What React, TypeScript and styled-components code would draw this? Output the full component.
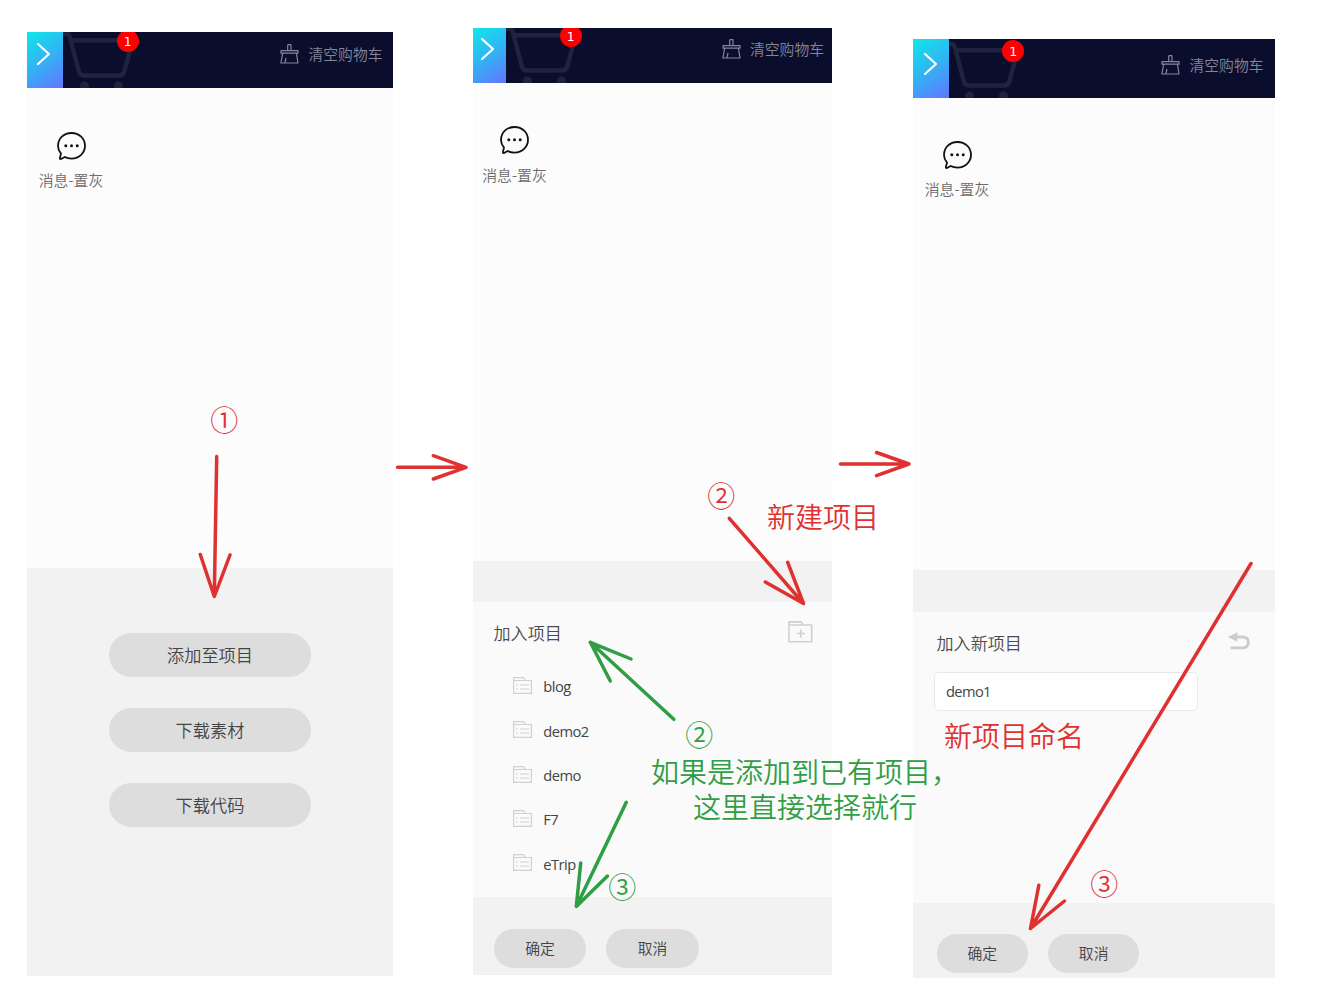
import React from "react";
import styled, { createGlobalStyle } from "styled-components";

const RED = "#e03131";
const GREEN = "#2f9e44";

const GlobalStyle = createGlobalStyle`
  * { box-sizing: border-box; }
  body {
    margin: 0;
    background: #fff;
    font-family: "Open Sans", "Noto Sans CJK SC", sans-serif;
    color: #444;
  }
`;

const Board = styled.main`
  position: relative;
  display: flex;
  align-items: flex-start;
  width: 1330px;
  height: 997px;
  overflow: hidden;
`;

const Panel = styled.section<{ $w: number; $h: number; $top: number; $left: number }>`
  display: flex;
  flex-direction: column;
  flex: none;
  width: ${(p) => p.$w}px;
  height: ${(p) => p.$h}px;
  margin: ${(p) => p.$top}px 0 0 ${(p) => p.$left}px;
  background: #f2f2f2;
  white-space: nowrap;
`;

const Header = styled.header<{ $h: number }>`
  position: relative;
  display: flex;
  flex: none;
  height: ${(p) => p.$h}px;
  background: #0a0d2c;
  overflow: hidden;
`;

const Toggle = styled.div<{ $w: number; $x: number; $y: number }>`
  flex: none;
  width: ${(p) => p.$w}px;
  height: 100%;
  padding: ${(p) => p.$y}px 0 0 ${(p) => p.$x}px;
  background: linear-gradient(145deg, #10e6e8 0%, #30b5f4 48%, #6474ff 100%);
  svg { display: block; }
`;

const CartArea = styled.div<{ $x: number; $y: number }>`
  position: absolute;
  left: ${(p) => p.$x}px;
  top: ${(p) => p.$y}px;
  svg { display: block; }
`;

const CartClip = styled.div`
  position: relative;
  flex: 1;
  overflow: hidden;
`;

const Badge = styled.span`
  position: absolute;
  left: 55.3px;
  top: -1px;
  width: 22px;
  height: 22px;
  border-radius: 50%;
  background: #f00;
  color: #fff;
  font: 12.5px/23px "DejaVu Sans", sans-serif;
  text-align: center;
`;

const ClearCart = styled.div<{ $y: number; $r: number }>`
  display: flex;
  flex: none;
  align-items: center;
  gap: 9.5px;
  height: 22px;
  margin: ${(p) => p.$y}px ${(p) => p.$r}px 0 0;
  color: #85869a;
  font-size: 14.8px;
  font-weight: 350;
  font-family: "Noto Sans CJK SC", sans-serif;
`;

const ClearLabel = styled.span`
  padding-bottom: 1px;
`;

const Content = styled.div<{ $h: number; $pad: number; $left: number }>`
  flex: none;
  height: ${(p) => p.$h}px;
  padding: ${(p) => p.$pad}px 0 0 ${(p) => p.$left}px;
  background: #fcfcfc;
`;

const Message = styled.figure`
  display: flex;
  flex-direction: column;
  align-items: center;
  width: 66px;
  margin: 0;
  gap: 9.6px;
  svg { display: block; }
`;

const Caption = styled.figcaption`
  font: 350 14.9px/22px "Noto Sans CJK SC", sans-serif;
  color: #6c6c6c;
`;

const Actions = styled.div`
  display: flex;
  flex-direction: column;
  align-items: center;
  gap: 30.8px;
  padding-top: 65px;
`;

const Pill = styled.button<{ $w: number; $h: number; $size: number }>`
  display: block;
  width: ${(p) => p.$w}px;
  height: ${(p) => p.$h}px;
  padding: 0 0 2px;
  border: 0;
  border-radius: ${(p) => p.$h / 2}px;
  background: #ddd;
  color: #444;
  font: 350 ${(p) => p.$size}px "Noto Sans CJK SC", sans-serif;
`;

const Sheet = styled.div<{ $gap: number; $h: number; $left: number; $right: number }>`
  flex: none;
  height: ${(p) => p.$h}px;
  margin-top: ${(p) => p.$gap}px;
  padding: 15px ${(p) => p.$right}px 0 ${(p) => p.$left}px;
  background: #fafafa;
`;

const SheetHead = styled.div`
  display: flex;
  align-items: center;
  justify-content: space-between;
  height: 30px;
`;

const SheetTitle = styled.h2`
  margin: 0;
  padding-top: 2px;
  font: 350 17.1px/30px "Noto Sans CJK SC", sans-serif;
  color: #4a4a4a;
`;

const ProjectList = styled.ul`
  margin: 17px 0 0 19.5px;
  padding: 0;
  list-style: none;
`;

const Project = styled.li`
  display: flex;
  align-items: center;
  gap: 11.3px;
  height: 44.4px;
  font-size: 14.7px;
  letter-spacing: -0.55px;
  svg { margin-top: -1.5px; }
`;

const NameInput = styled.input`
  display: block;
  width: 264px;
  height: 39px;
  margin: 15px 0 0 -2.5px;
  padding: 0 11px;
  border: 1px solid #e8e8e8;
  border-radius: 5px;
  background: #fff;
  color: #444;
  font: 14.7px "Open Sans", sans-serif;
  letter-spacing: -0.65px;
`;

const Footer = styled.footer<{ $top: number; $left: number }>`
  display: flex;
  gap: 20px;
  padding: ${(p) => p.$top}px 0 0 ${(p) => p.$left}px;
`;

const Arrows = styled.svg`
  position: absolute;
  inset: 0;
  pointer-events: none;
  fill: none;
  stroke-width: 3.5;
  stroke-linecap: round;
  stroke-linejoin: round;
`;

const Note = styled.div<{ $x: number; $y: number; $color: string }>`
  position: absolute;
  left: ${(p) => p.$x}px;
  top: ${(p) => p.$y}px;
  transform: translate(-50%, -50%);
  color: ${(p) => p.$color};
  font: 350 28px/35px "Noto Sans CJK SC", sans-serif;
  text-align: center;
  white-space: nowrap;
`;

const Step = styled(Note)`
  font-weight: 350;
`;

const Chevron = () => (
  <svg width="15" height="24" fill="none" stroke="#fff" strokeWidth="2.2" strokeLinecap="round" strokeLinejoin="round">
    <path d="M2 2 13 12 2 22" />
  </svg>
);

const Cart = () => (
  <svg width="80" height="62" fill="none" stroke="#20233f" strokeWidth="4.4" strokeLinecap="round" strokeLinejoin="round">
    <path d="M-2 3H4.500Q7 3 7.700 6L16.500 39Q17.800 44.500 21.500 44.500H57Q61 44.500 62.200 40.500L71 9.200H8.500" />
    <circle cx="22.500" cy="55" r="4.500" fill="#20233f" stroke="none" />
    <circle cx="56.500" cy="55" r="4.500" fill="#20233f" stroke="none" />
  </svg>
);

const Broom = () => (
  <svg width="19" height="20" fill="none" stroke="currentColor" strokeWidth="1.200" strokeLinejoin="round">
    <path d="M7.700 6.500V1.200Q7.700.7 8.200.7H10.500Q11 .7 11 1.200V6.500M1 6.600H18V9.200H1ZM2.700 9.200 .9 19H18L16.400 9.200M4.900 19 6 14" />
  </svg>
);

const Bubble = () => (
  <svg width="29" height="28" fill="none" stroke="#111" strokeWidth="1.800" strokeLinejoin="round">
    <path d="M4 21.600C2.300 19.500 1 17 1 14 1 6.600 6.800 1 14.500 1S28 6.600 28 13.800 22.200 26.600 14.500 26.600C11.900 26.600 9.700 26.100 7.700 25L4 27Q2.700 27.300 2.900 25.900Z" />
    <g fill="#111" stroke="none"><circle cx="8.800" cy="13.800" r="1.500" /><circle cx="14.500" cy="13.800" r="1.500" /><circle cx="20.200" cy="13.800" r="1.500" /></g>
  </svg>
);

const ListFolder = () => (
  <svg width="19" height="17" fill="none" stroke="#d0d0d0" strokeWidth="1.200" strokeLinejoin="round">
    <path d="M.6 16.400V.6H10.500L12.500 3.500H18.400V16.400ZM.6 3.500H12.500M3 8H4.800M7 8H16M3 12H4.800M7 12H16" />
  </svg>
);

const AddFolder = () => (
  <svg width="25" height="22" fill="none" stroke="#d0d0d0" strokeWidth="1.600" strokeLinejoin="round">
    <path d="M.9 20.800V.9H13L15.500 4H23.700V20.800ZM.9 4H15.500M8.500 12.500H17M12.700 8.300V16.700" />
  </svg>
);

const Return = () => (
  <svg width="22" height="20" fill="none">
    <path d="M8 5H14.500C18.500 5 20.300 7.200 20.300 10.200S18.500 15.900 14.500 15.900H2.500" stroke="#ccc" strokeWidth="2.900" />
    <path d="M0 5 9.300.3V9.700Z" fill="#ccc" />
  </svg>
);

interface TopProps {
  h: number;
  toggle: number;
  cx: number;
  cy: number;
  cartX: number;
  cartY: number;
  clearY: number;
  clearR: number;
}

const TopBar = (p: TopProps) => (
  <Header $h={p.h}>
    <Toggle $w={p.toggle} $x={p.cx} $y={p.cy}><Chevron /></Toggle>
    <CartClip>
      <CartArea $x={p.cartX} $y={p.cartY}><Cart /><Badge>1</Badge></CartArea>
    </CartClip>
    <ClearCart $y={p.clearY} $r={p.clearR}><Broom /><ClearLabel>清空购物车</ClearLabel></ClearCart>
  </Header>
);

const IconItem = () => (
  <Message>
    <Bubble />
    <Caption>消息-置灰</Caption>
  </Message>
);

const projects = ["blog", "demo2", "demo", "F7", "eTrip"];

export default function App() {
  return (
    <>
      <GlobalStyle />
      <Board>
        <Panel $w={366} $h={944} $top={32} $left={27}>
          <TopBar h={56} toggle={36} cx={9.3} cy={9.5} cartX={-1.5} cartY={-1.5} clearY={11} clearR={10.5} />
          <Content $h={480} $pad={43.7} $left={11}><IconItem /></Content>
          <Actions>
            {["添加至项目", "下载素材", "下载代码"].map((t) => (
              <Pill key={t} $w={202} $h={44.2} $size={17.2}>{t}</Pill>
            ))}
          </Actions>
        </Panel>

        <Panel $w={359} $h={947} $top={28} $left={80}>
          <TopBar h={55} toggle={33} cx={7} cy={8.7} cartX={-1.5} cartY={-2.3} clearY={10} clearR={8} />
          <Content $h={477.7} $pad={43.2} $left={8.5}><IconItem /></Content>
          <Sheet $gap={41.3} $h={295} $left={20.5} $right={19.5}>
            <SheetHead><SheetTitle>加入项目</SheetTitle><AddFolder /></SheetHead>
            <ProjectList>
              {projects.map((name) => <Project key={name}><ListFolder />{name}</Project>)}
            </ProjectList>
          </Sheet>
          <Footer $top={32} $left={20.7}>
            <Pill $w={92.5} $h={39} $size={14.8}>确定</Pill>
            <Pill $w={92.5} $h={39} $size={14.8}>取消</Pill>
          </Footer>
        </Panel>

        <Panel $w={362} $h={939} $top={39} $left={81}>
          <TopBar h={59} toggle={36} cx={10} cy={13.3} cartX={-2} cartY={1.7} clearY={15} clearR={11.5} />
          <Content $h={472.3} $pad={42.7} $left={11}><IconItem /></Content>
          <Sheet $gap={41.7} $h={291.4} $left={23.5} $right={24.7}>
            <SheetHead><SheetTitle>加入新项目</SheetTitle><Return /></SheetHead>
            <NameInput defaultValue="demo1" />
          </Sheet>
          <Footer $top={31} $left={23.7}>
            <Pill $w={91.3} $h={39} $size={14.8}>确定</Pill>
            <Pill $w={91.3} $h={39} $size={14.8}>取消</Pill>
          </Footer>
        </Panel>

        <Arrows width="1330" height="997">
          <g stroke={RED}>
            <path d="M216.700 456.500 214.300 596.500M200.300 554.500 214.300 596.500 230 555" />
            <path d="M397.500 467.300H466M433.300 455.700 466 467.300 433.300 479" />
            <path d="M840.500 464H909M876.500 452.500 909 464 876.500 475.700" />
            <path d="M729.300 518.300 803.500 603.500M787.700 562.300 803.500 603.500 765.300 582" />
            <path d="M1251 563.500 1030.500 928.500M1038.800 885.300 1030.500 928.500 1064.500 901" />
          </g>
          <g stroke={GREEN}>
            <path d="M673.800 719.300 590.300 642.300M631 659 590.300 642.300 610.300 681" />
            <path d="M626.300 802.300 576.300 906.500M580.700 863 576.300 906.500 607.500 876" />
          </g>
        </Arrows>

        <Step $x={224.3} $y={418.5} $color={RED}>①</Step>
        <Step $x={721.3} $y={494.5} $color={RED}>②</Step>
        <Step $x={699.3} $y={733.5} $color={GREEN}>②</Step>
        <Step $x={622.3} $y={885.5} $color={GREEN}>③</Step>
        <Step $x={1104.3} $y={882.5} $color={RED}>③</Step>
        <Note $x={823} $y={515.5} $color={RED}>新建项目</Note>
        <Note $x={1014} $y={734.5} $color={RED}>新项目命名</Note>
        <Note $x={805} $y={788.5} $color={GREEN}>如果是添加到已有项目，<br />这里直接选择就行</Note>
      </Board>
    </>
  );
}
